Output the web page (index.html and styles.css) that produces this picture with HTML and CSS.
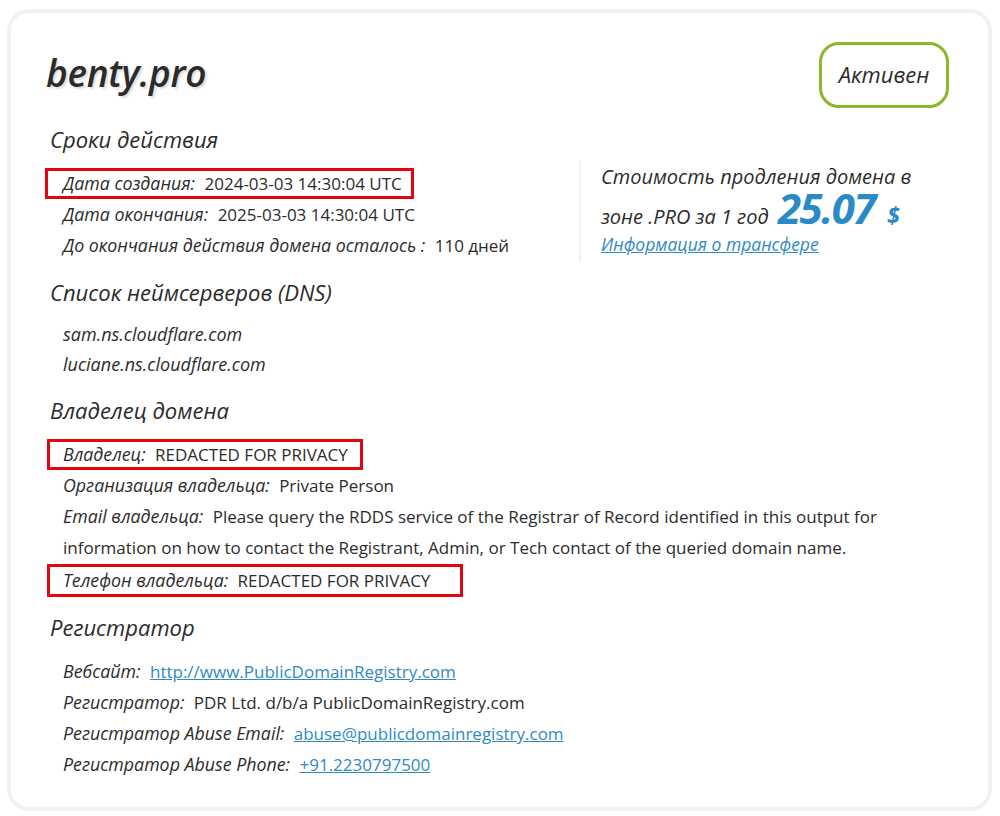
FILE: index.html
```html
<!DOCTYPE html>
<html lang="ru">
<head>
<meta charset="utf-8">
<title>benty.pro</title>
<link rel="stylesheet" href="styles.css">
</head>
<body>
<div class="card">
  <div class="header">
    <h1 class="title">benty.pro</h1>
    <div class="badge">Активен</div>
  </div>

  <section class="section first">
    <h2 class="heading">Сроки действия</h2>
    <div class="term">
      <div class="term-rows">
        <div class="row hl hl-a"><span class="label">Дата создания:</span> <span class="val">2024-03-03 14:30:04 UTC</span></div>
        <div class="row"><span class="label">Дата окончания:</span> <span class="val">2025-03-03 14:30:04 UTC</span></div>
        <div class="row"><span class="label">До окончания действия домена осталось :</span> <span class="val">110 дней</span></div>
      </div>
      <div class="price">
        <div class="price-text">Стоимость продления домена в зоне .PRO за 1 год <span class="amount">25.07</span><span class="cur">$</span></div>
        <a class="transfer" href="#">Информация о трансфере</a>
      </div>
    </div>
  </section>

  <section class="section">
    <h2 class="heading">Список неймсерверов (DNS)</h2>
    <div class="ns-list">
      <div class="ns">sam.ns.cloudflare.com</div>
      <div class="ns">luciane.ns.cloudflare.com</div>
    </div>
  </section>

  <section class="section">
    <h2 class="heading">Владелец домена</h2>
    <div class="row hl hl-b"><span class="label">Владелец:</span> <span class="val">REDACTED FOR PRIVACY</span></div>
    <div class="row"><span class="label">Организация владельца:</span> <span class="val">Private Person</span></div>
    <div class="row wrap"><span class="label">Email владельца:</span> <span class="val">Please query the RDDS service of the Registrar of Record identified in this output for information on how to contact the Registrant, Admin, or Tech contact of the queried domain name.</span></div>
    <div class="row hl hl-c"><span class="label">Телефон владельца:</span> <span class="val">REDACTED FOR PRIVACY</span></div>
  </section>

  <section class="section">
    <h2 class="heading">Регистратор</h2>
    <div class="row"><span class="label">Вебсайт:</span> <a class="val link" href="#">http://www.PublicDomainRegistry.com</a></div>
    <div class="row"><span class="label">Регистратор:</span> <span class="val">PDR Ltd. d/b/a PublicDomainRegistry.com</span></div>
    <div class="row"><span class="label">Регистратор Abuse Email:</span> <a class="val link" href="#">abuse@publicdomainregistry.com</a></div>
    <div class="row"><span class="label">Регистратор Abuse Phone:</span> <a class="val link" href="#">+91.2230797500</a></div>
  </section>
</div>
</body>
</html>
```

FILE: styles.css
```css
* { box-sizing: border-box; }
html, body { margin: 0; padding: 0; background: #ffffff; }
body {
  font-family: "Open Sans", sans-serif;
  color: #2c2c2c;
  padding: 9px 8px 5px 7px;
}
.card {
  border: 4px solid #f1f1f1;
  border-radius: 22px;
  background: #fff;
  padding: 29px 39px 31px 37px;
  height: 802px;
}
.header {
  display: flex;
  justify-content: space-between;
  align-items: flex-start;
}
.title {
  margin: 5px 0 0 -2px;
  font-family: "Open Sans", sans-serif;
  font-style: italic;
  font-weight: 600;
  font-size: 37px;
  line-height: 52px;
  color: #2b2b2b;
  letter-spacing: -0.3px;
  text-shadow: 2px 2px 2px rgba(0,0,0,0.13);
}
.badge {
  width: 130px;
  height: 66px;
  border: 3px solid #8bb829;
  border-radius: 20px;
  display: flex;
  align-items: center;
  justify-content: center;
  padding-bottom: 3px;
  font-family: "Open Sans", sans-serif;
  font-style: italic;
  font-size: 22px;
  color: #2b2b2b;
}
.section { margin-top: 16px; }
.heading {
  margin: 0 0 14px 2px;
  font-family: "Open Sans", sans-serif;
  font-style: italic;
  font-weight: 400;
  font-size: 22px;
  line-height: 30px;
  color: #2b2b2b;
}
.term { display: flex; align-items: flex-start; }
.term-rows { width: 531px; flex: none; }
.row {
  line-height: 31px;
  font-size: 17px;
  padding-left: 15px;
}
.row.hl {
  display: flow-root;
  width: fit-content;
  border: 3px solid #e3060f;
  line-height: 25px;
  margin-left: -3px;
  padding-left: 15px;
}
.row.hl-a { padding-right: 9px; }
.row.hl-b {
  margin-left: -1px;
  padding-left: 13px;
  padding-right: 12px;
}
.row.hl-c {
  margin-left: -1px;
  padding-left: 13px;
  padding-right: 30px;
  line-height: 26px;
  margin-top: 1px;
  margin-bottom: -1px;
}
.row.wrap { max-width: 872px; }
.label {
  font-family: "Open Sans", sans-serif;
  font-style: italic;
  font-size: 17.8px;
  margin-right: 5px;
}
.val { font-family: "Open Sans", sans-serif; font-size: 17px; }
.link { color: #2f8ac3; text-decoration: underline; }
.price {
  margin-top: -8px;
  margin-bottom: -10px;
  border-left: 2px solid #f2f2f2;
  padding: 0 0 3px 20px;
  width: 350px;
  font-family: "Open Sans", sans-serif;
  font-style: italic;
  font-size: 20px;
  color: #2b2b2b;
}
.price-text { line-height: 33px; }
.amount {
  font-weight: 700;
  font-size: 42px;
  color: #2a8ac6;
  line-height: 30px;
  letter-spacing: -1.5px;
  margin-left: 4px;
}
.cur {
  font-weight: 700;
  font-size: 23px;
  color: #2a8ac6;
  margin-left: 12px;
}
.transfer {
  display: block;
  width: fit-content;
  margin-top: -4px;
  font-size: 17.5px;
  line-height: 30px;
  color: #2f8ac3;
  text-decoration: underline;
}
.ns-list { margin-top: -2px; }
.ns {
  padding-left: 15px;
  font-family: "Open Sans", sans-serif;
  font-style: italic;
  font-size: 18px;
  line-height: 30px;
}
```
